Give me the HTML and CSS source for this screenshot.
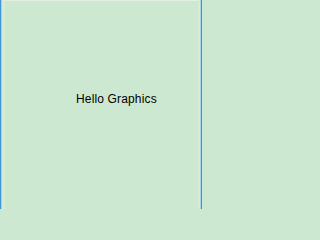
FILE: index.html
```html
<!DOCTYPE html>
<html>
<head>
<meta charset="utf-8">
<link rel="stylesheet" href="styles.css">
</head>
<body>
<div class="frame">
  <div class="edge-left"></div>
  <div class="canvas">
    <div class="top-line"></div>
    <div class="text-row"><span class="hello">Hello Graphics</span></div>
  </div>
  <div class="edge-right"></div>
</div>
</body>
</html>
```
FILE: styles.css
```css
html, body {
  margin: 0;
  padding: 0;
  background: #cde8d0;
}
.frame {
  display: flex;
  width: 202px;
  height: 209px;
}
.edge-left {
  width: 5px;
  flex: none;
  background: linear-gradient(to right, #3f95d2 0 1px, #a6d6ee 1px 2px, #d2eadc 2px 3px, #dbebd0 3px 5px);
}
.edge-right {
  width: 4px;
  flex: none;
  background: linear-gradient(to right, #dbebd0 0 2px, #a6d6ee 2px 3px, #3f95d2 3px 4px);
}
.canvas {
  flex: 1;
  display: flex;
  flex-direction: column;
  background: #cde8d0;
}
.top-line {
  height: 1px;
  background: #e4ede4;
}
.text-row {
  padding-top: 88px;
  padding-left: 71px;
}
.hello {
  font-family: "Liberation Sans", Arial, sans-serif;
  font-size: 12px;
  line-height: 14px;
  letter-spacing: 0.15px;
  color: #000;
}
```
